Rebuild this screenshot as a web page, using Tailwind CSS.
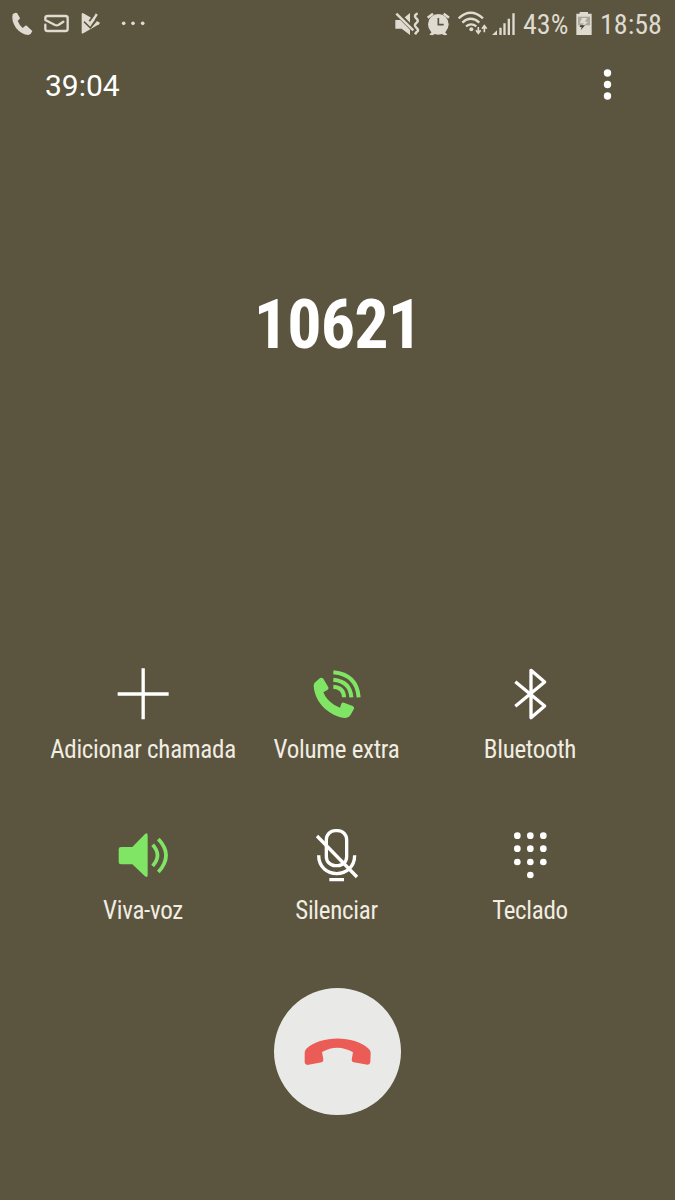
<!DOCTYPE html>
<html lang="pt-BR">
<head>
<meta charset="utf-8">
<meta name="viewport" content="width=device-width">
<title>Chamada</title>
<script src="https://cdn.jsdelivr.net/npm/@tailwindcss/browser@4"></script>
</head>
<body class="bg-[#5b543e]">
<div class="flex h-[1200px] w-[675px] flex-col overflow-hidden bg-[#5b543e] font-['Roboto_Condensed','Roboto',sans-serif] text-white [font-stretch:75%]">
  <!-- Status bar -->
  <header class="flex h-12 items-center justify-between text-[28px] leading-none text-[#dfdbd0]">
    <svg class="h-12 w-40" viewBox="0 0 480 144" fill="none" stroke="#dfdbd0">
      <path fill="#dfdbd0" stroke="none" d="M38 43Q44 37 51 39L60 54Q60 58 53 62Q58 75 68 84L76 77Q80 76 84 81L97 93Q94 103 85 105Q65 104 48 84Q33 62 38 43Z"/>
      <path stroke-width="7" stroke-linejoin="round" stroke-linecap="round" d="M136 57V54Q136 48 143 48H196Q203 48 203 54V86Q203 93 196 93H143Q136 93 136 86V74M136 60L165 75Q170 77 175 75L190 65"/>
      <path fill="#dfdbd0" stroke="none" d="M245 42Q245 38 250 40L297 67Q302 70 297 73L250 100Q245 102 245 98Z"/>
      <path stroke="#5b543e" stroke-width="7" d="M253 64L271 82L297 50"/>
      <path stroke-width="8" d="M256 60L270 74L290 42"/>
      <path stroke="#5b543e" stroke-width="5" d="M268 64L285 40"/>
      <g fill="#dfdbd0" stroke="none"><circle cx="371" cy="70" r="5.500"/><circle cx="399" cy="70" r="5.500"/><circle cx="428" cy="70" r="5.500"/></g>
    </svg>
    <div class="flex h-12 items-center pr-[13px]">
      <svg class="h-12 w-[130px]" viewBox="0 0 390 144" fill="none" stroke="#dfdbd0">
        <g fill="#dfdbd0" stroke="none">
          <path d="M31 60H46L75 89V105L50 86H31Z"/><path d="M59 52L75 39V68Z"/>
          <circle cx="160" cy="73" r="31"/><path d="M142 94L151 101L142 106L133 104ZM178 94L169 101L178 106L187 104Z"/>
          <circle cx="259" cy="88" r="6"/>
          <path d="M321 105L336 91V105ZM343 83H350V105H343ZM355 70H362V105H355ZM368 56H375V105H368ZM382 40H389V105H382Z"/>
        </g>
        <path stroke-width="7.500" d="M34 41L85 91M98 40Q86 45 92 53Q103 61 95 68Q85 75 94 83Q104 91 95 96L90 103M128 53L144 41M192 53L176 41"/>
        <path stroke="#5b543e" stroke-width="5" d="M160 54V74H176"/>
        <path stroke-width="7" d="M221 55Q257 22 294 55M232 68Q257 45 283 68M243 79Q259 67 274 79"/>
        <path stroke-width="5" d="M280 81V99M273 91L280 100L287 91M298 97V78M291 86L298 77L305 86"/>
      </svg>
      <span class="ml-[8px] w-[45px] whitespace-nowrap pt-px">43%</span>
      <svg class="ml-2 h-12 w-4" viewBox="184 0 48 144">
        <path fill="#dfdbd0" d="M185 41H195V36H220V41H231V105H185Z"/>
        <path fill="#aaa79b" d="M190 50H226V76H190Z"/>
        <path fill="#dfdbd0" d="M202 54H217L211 65H221L202 81L207 70H195Z"/>
        <path fill="#45422f" d="M196 76H211L198 91L201 81H195Z"/>
      </svg>
      <span class="ml-2 w-[62px] whitespace-nowrap pt-px">18:58</span>
    </div>
  </header>

  <div class="flex h-[74px] items-center justify-between pl-[45px] pr-[62px]">
    <span class="pt-px text-[30px] leading-none [font-stretch:100%] font-['Roboto',sans-serif]">39:04</span>
    <svg class="h-8 w-3" viewBox="0 0 12 32" fill="white"><circle cx="6.500" cy="4" r="3.700"/><circle cx="6.500" cy="15.500" r="3.700"/><circle cx="6.500" cy="27" r="3.700"/></svg>
  </div>

  <h1 class="mt-[163px] text-center text-[68px] font-bold leading-[80px] tracking-[-0.9px]">10621</h1>

  <!-- In-call controls -->
  <main class="mt-[299px] grid grid-cols-[194px_193px_194px] pl-[46px] text-center text-[25px] leading-[30px] tracking-[-0.29px] text-[#f1ede2]">
    <div class="flex h-[161px] flex-col items-center">
      <svg class="h-[60px] w-[60px]" viewBox="220 26 180 180" stroke="white" stroke-width="10" fill="none"><path d="M234 116H387M310.500 39V192"/></svg>
      <span class="mt-[11px] whitespace-nowrap">Adicionar chamada</span>
    </div>
    <div class="flex h-[161px] flex-col items-center">
      <svg class="h-[60px] w-[60px]" viewBox="140 26 180 180" fill="#80e565">
        <path d="M163 82L179 68Q185 65 189 70L204 96Q206 101 201 104L189 111Q198 134 221 148L239 157L243 145Q245 141 251 142L277 152Q283 155 281 160L270 180Q265 188 256 188C207 183 163 142 160 91Q160 86 163 82Z"/>
        <path fill="none" stroke="#80e565" stroke-width="12" d="M219 94Q251 97 251 126M219 73Q270 78 273 126M219 51Q290 58 295 126"/>
      </svg>
      <span class="mt-[11px] whitespace-nowrap">Volume extra</span>
    </div>
    <div class="flex h-[161px] flex-col items-center">
      <svg class="h-[60px] w-[60px]" viewBox="91 26 180 180" stroke="white" stroke-width="10" fill="none" stroke-linejoin="round"><path d="M137 79L225 152L184 187V45L225 80L137 153"/></svg>
      <span class="mt-[11px] whitespace-nowrap">Bluetooth</span>
    </div>
    <div class="flex flex-col items-center">
      <svg class="h-[60px] w-[60px]" viewBox="70 14 180 180" fill="#80e565">
        <path d="M94 80H128L166 41Q174 35 174 46V164Q174 174 166 168L128 132H94Q87 132 87 125V87Q87 80 94 80Z"/>
        <path fill="none" stroke="#80e565" stroke-width="11" d="M189 73Q218 105 189 137M206 56Q252 105 206 155"/>
      </svg>
      <span class="mt-[11px] whitespace-nowrap">Viva-voz</span>
    </div>
    <div class="flex flex-col items-center">
      <svg class="h-[60px] w-[60px]" viewBox="80 29 180 180" stroke="white" stroke-width="10" fill="none">
        <rect x="138" y="46" width="61" height="105" rx="27"/><path d="M115 120C115 193 223 193 223 120M147 193H191M110 62L230 185"/>
      </svg>
      <span class="mt-[11px] whitespace-nowrap">Silenciar</span>
    </div>
    <div class="flex flex-col items-center">
      <svg class="h-[60px] w-[60px]" viewBox="61 29 180 180" fill="white">
        <circle cx="113" cy="61" r="10"/><circle cx="152" cy="61" r="10"/><circle cx="191" cy="61" r="10"/>
        <circle cx="113" cy="100" r="10"/><circle cx="152" cy="100" r="10"/><circle cx="191" cy="100" r="10"/>
        <circle cx="113" cy="140" r="10"/><circle cx="152" cy="140" r="10"/><circle cx="191" cy="140" r="10"/>
        <circle cx="152" cy="179" r="10"/>
      </svg>
      <span class="mt-[11px] whitespace-nowrap">Teclado</span>
    </div>
  </main>

  <button aria-label="Encerrar chamada" class="mx-auto mt-[62px] flex h-[127px] w-[127px] shrink-0 items-center justify-center rounded-full bg-[#e9eae8]">
    <svg class="h-[127px] w-[127px]" viewBox="27 24 381 381" fill="#eb5c56"><path d="M119 220Q119 211 124 206C168 165 267 165 311 206Q317 211 317 220L316 246Q315 254 308 254L266 247Q260 246 260 239L264 217Q218 190 171 216L175 238Q176 245 170 247L127 255Q120 255 119 247Z"/></svg>
  </button>
</div>
</body>
</html>
